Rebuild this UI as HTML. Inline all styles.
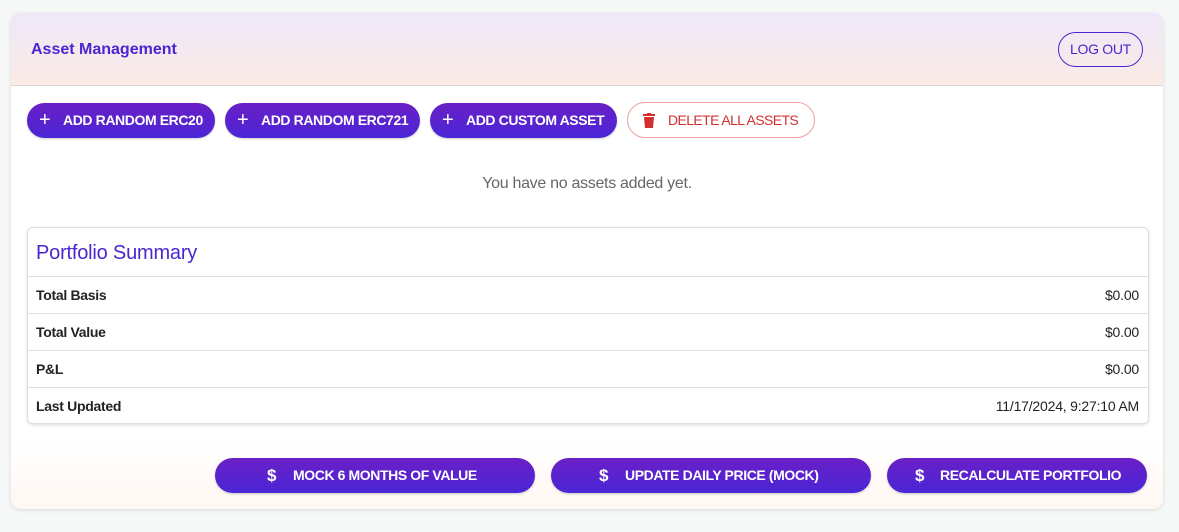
<!DOCTYPE html>
<html><head><style>
*{box-sizing:border-box;margin:0;padding:0}
body{width:1179px;height:532px;background:#f6f7f7;font-family:"Liberation Sans",sans-serif;position:relative;overflow:hidden}
.card{position:absolute;left:11px;top:13px;width:1152px;height:496px;background:#fff;border-radius:10px;box-shadow:0 1px 4px rgba(0,0,0,.12);overflow:hidden}
.hdr{position:absolute;left:0;top:0;right:0;height:73px;background:linear-gradient(#ede7f9,#fbebe5);border-bottom:1px solid #d8d4d4}
.title{position:absolute;left:20px;top:28px;font-size:16px;font-weight:bold;color:#4a26d0}
.logout{position:absolute;left:1047px;top:19px;width:85px;height:35px;border:1px solid #4a26d0;border-radius:18px;color:#4a26d0;font-size:14px;text-align:center;line-height:33px;letter-spacing:-0.3px}
.btn{position:absolute;height:35px;border-radius:18px;background:linear-gradient(#6a1fc6,#4a26d6);color:#fff;font-size:14px;font-weight:bold;line-height:35px;white-space:nowrap;box-shadow:0 1px 2px rgba(0,0,0,.2);letter-spacing:-0.4px}
.btn .ic{position:absolute;left:12px;top:0;font-size:20px;font-weight:normal}
.btn .t{position:absolute;left:36px}
.del{position:absolute;left:616px;top:89px;width:188px;height:36px;border:1px solid #f0a0a0;border-radius:18px;color:#d32f2f;font-size:14px;line-height:34px;letter-spacing:-0.6px}
.empty{position:absolute;left:0;right:0;top:162px;text-align:center;color:#666;font-size:16px;letter-spacing:-0.3px}
.ps{position:absolute;left:16px;top:214px;width:1122px;height:197px;border:1px solid #e0e0e0;border-radius:6px;box-shadow:0 1px 3px rgba(0,0,0,.15);background:#fff}
.ps h2{position:absolute;left:8px;top:14px;font-size:20px;font-weight:normal;color:#4a26d0;letter-spacing:-0.2px}
.row{position:absolute;left:0;right:0;height:37px;border-top:1px solid #e0e0e0;font-size:14px;color:#222;line-height:36px}
.row b{position:absolute;left:8px;letter-spacing:-0.3px}
.row span{position:absolute;right:9px;letter-spacing:-0.2px}
.ftr{position:absolute;left:0;right:0;top:428px;height:68px;background:linear-gradient(#fff,#fff7f2)}
</style></head><body>
<div class="card">
<div class="hdr"><div class="title">Asset Management</div><div class="logout">LOG OUT</div></div>
<div class="btn" style="left:16px;top:90px;width:188px"><span class="ic">+</span><span class="t">ADD RANDOM ERC20</span></div>
<div class="btn" style="left:214px;top:90px;width:195px"><span class="ic">+</span><span class="t">ADD RANDOM ERC721</span></div>
<div class="btn" style="left:419px;top:90px;width:187px"><span class="ic">+</span><span class="t">ADD CUSTOM ASSET</span></div>
<div class="del"><svg style="position:absolute;left:15px;top:10px" width="12" height="15" viewBox="0 0 12 15"><rect x="0" y="1" width="12" height="2" fill="#d32f2f"/><rect x="4" y="0" width="4" height="2" fill="#d32f2f"/><path d="M1 4h10l-1 11H2z" fill="#d32f2f"/></svg><span style="position:absolute;left:40px">DELETE ALL ASSETS</span></div>
<div class="empty">You have no assets added yet.</div>
<div class="ps"><h2>Portfolio Summary</h2>
<div class="row" style="top:48px"><b>Total Basis</b><span>$0.00</span></div>
<div class="row" style="top:85px"><b>Total Value</b><span>$0.00</span></div>
<div class="row" style="top:122px"><b>P&amp;L</b><span>$0.00</span></div>
<div class="row" style="top:159px"><b>Last Updated</b><span>11/17/2024, 9:27:10 AM</span></div>
</div>
<div class="ftr">
<div class="btn" style="left:204px;top:17px;width:320px"><span class="ic" style="left:52px;font-size:17px;font-weight:bold">$</span><span class="t" style="left:78px">MOCK 6 MONTHS OF VALUE</span></div>
<div class="btn" style="left:540px;top:17px;width:320px"><span class="ic" style="left:48px;font-size:17px;font-weight:bold">$</span><span class="t" style="left:74px">UPDATE DAILY PRICE (MOCK)</span></div>
<div class="btn" style="left:876px;top:17px;width:260px"><span class="ic" style="left:28px;font-size:17px;font-weight:bold">$</span><span class="t" style="left:53px">RECALCULATE PORTFOLIO</span></div>
</div>
</div>
</body></html>
